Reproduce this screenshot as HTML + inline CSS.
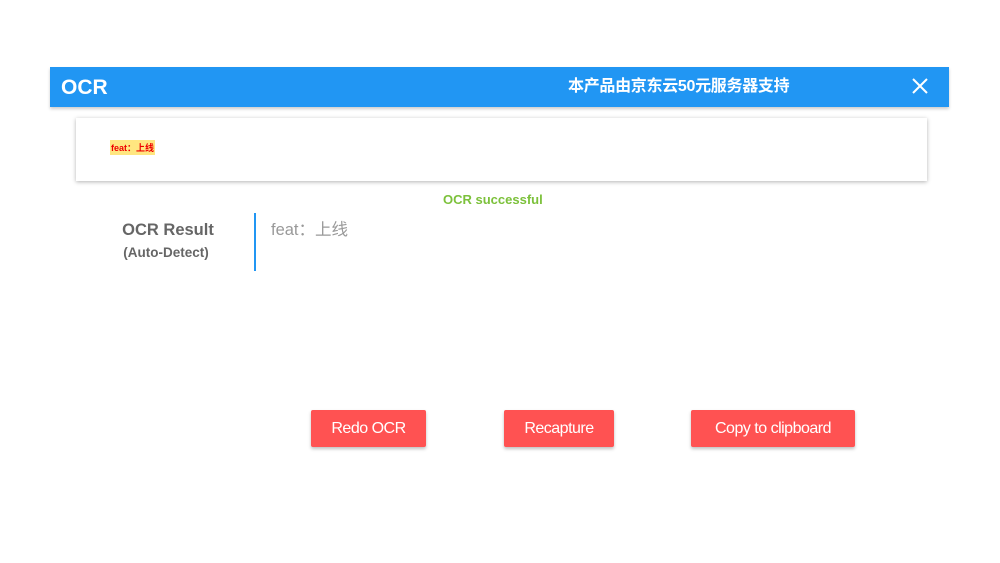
<!DOCTYPE html>
<html><head><meta charset="utf-8"><style>
body{margin:0;width:1000px;height:563px;background:#fff;position:relative;overflow:hidden;font-family:"Liberation Sans","Noto Sans CJK SC",sans-serif}
.a{position:absolute}
.hdr{left:50px;top:67px;width:899px;height:40px;background:#2196f3;box-shadow:0 2px 3px rgba(0,0,0,.2)}
.btn{position:absolute;top:410px;height:37px;background:#ff5252;color:#fff;font-size:16px;line-height:37px;text-align:center;border-radius:2px;box-shadow:0 2px 3px rgba(0,0,0,.25);letter-spacing:-0.5px}
</style></head><body>
<div class="a hdr">
<div class="a" style="left:11px;top:9px;color:#fff;font-weight:bold;font-size:21px">OCR</div>
<div class="a" style="left:518px;top:8px;color:#fff;font-weight:bold;font-size:16px;letter-spacing:-0.3px;line-height:24px">本产品由京东云50元服务器支持</div>
<svg class="a" style="left:861px;top:10px" width="18" height="18"><path d="M2 2L16 16M16 2L2 16" stroke="#fff" stroke-width="2"/></svg>
</div>
<div class="a" style="left:76px;top:118px;width:851px;height:63px;background:#fff;box-shadow:0 1px 4px rgba(0,0,0,.3)"></div>
<div class="a" style="left:110px;top:140px;background:#ffe680;color:#e00;font-size:9px;padding:1px 1px;font-weight:bold">feat：上线</div>
<div class="a" style="left:443px;top:192px;color:#7cc13b;font-weight:bold;font-size:13px">OCR successful</div>
<div class="a" style="left:100px;top:221px;width:136px;text-align:center;color:#666;font-weight:bold;font-size:16.5px">OCR Result</div>
<div class="a" style="left:99px;top:245px;width:134px;text-align:center;color:#666;font-weight:bold;font-size:13.5px">(Auto-Detect)</div>
<div class="a" style="left:254px;top:213px;width:2px;height:58px;background:#2196f3"></div>
<div class="a" style="left:271px;top:216px;color:#999;font-size:16.5px">feat：上线</div>
<div class="btn" style="left:311px;width:115px">Redo OCR</div>
<div class="btn" style="left:504px;width:110px">Recapture</div>
<div class="btn" style="left:691px;width:164px">Copy to clipboard</div>
</body></html>
